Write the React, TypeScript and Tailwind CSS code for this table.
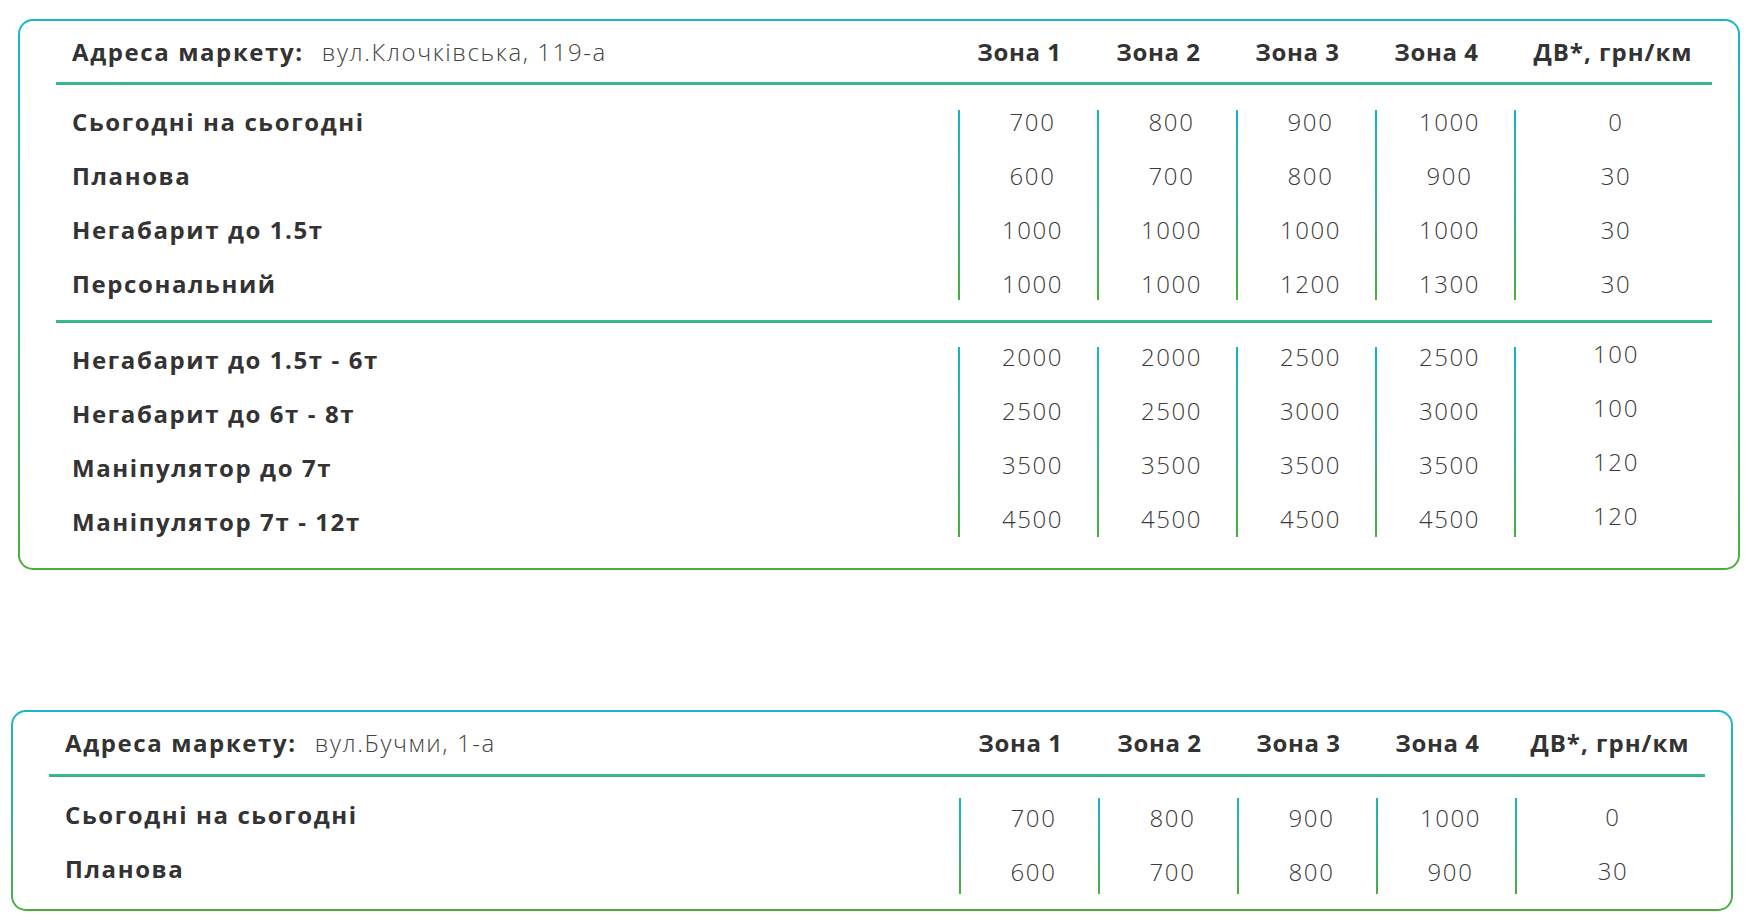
type Row = { label: string; values: string[] };

type Section = {
  rows: Row[];
  pad: string;
  bar: string;
  labelShift: string;
  lastShift: string;
};

const font = { fontFamily: '"Open Sans", "Liberation Sans", sans-serif' };

function Line() {
  return <div className="h-[3px] bg-linear-to-b from-[#2cbdc2] to-[#43b049]" />;
}

function Card({
  address,
  cols,
  head,
  sections,
  outer,
}: {
  address: string;
  cols: string;
  head: string;
  sections: Section[];
  outer: string;
}) {
  return (
    <div className={`rounded-[15px] bg-linear-to-b from-[#16b7c6] to-[#4bae3a] p-[2px] ${outer}`}>
      <div className="rounded-[13px] bg-white pl-[36px] pr-[26px] text-[#333]" style={font}>
        <div className={`grid items-center ${head} ${cols}`}>
          <div className="flex items-center pl-[16px]">
            <span className="text-[24px] font-bold tracking-[1.6px]">Адреса маркету:</span>
            <span className="ml-[18px] text-[24px] font-light tracking-[1.6px] text-[#444]">{address}</span>
          </div>
          {['Зона 1', 'Зона 2', 'Зона 3', 'Зона 4'].map((z) => (
            <div key={z} className="pr-[16px] text-center text-[24px] font-bold tracking-[0.6px]">
              {z}
            </div>
          ))}
          <div className="text-center text-[24px] font-bold tracking-[1px]">ДВ*, грн/км</div>
        </div>
        {sections.map((s, i) => (
          <div key={i}>
            <Line />
            <div className={`grid ${cols} ${s.pad}`}>
              <div className="flex flex-col pl-[16px]">
                {s.rows.map((r) => (
                  <div
                    key={r.label}
                    className={`flex h-[54px] items-center text-[24px] font-bold tracking-[1.6px] ${s.labelShift}`}
                  >
                    {r.label}
                  </div>
                ))}
              </div>
              {[0, 1, 2, 3, 4].map((c) => (
                <div key={c} className="flex">
                  <div className={`w-[2px] bg-linear-to-b from-[#12b5c8] to-[#4aae38] ${s.bar}`} />
                  <div className={`flex flex-1 flex-col ${c === 4 ? s.lastShift : 'pl-[8px]'}`}>
                    {s.rows.map((r) => (
                      <div
                        key={r.label}
                        className="flex h-[54px] items-center justify-center text-[24px] font-light tracking-[1.6px] text-[#3a3a3a]"
                      >
                        {r.values[c]}
                      </div>
                    ))}
                  </div>
                </div>
              ))}
            </div>
          </div>
        ))}
      </div>
    </div>
  );
}

const top: Row[] = [
  { label: 'Сьогодні на сьогодні', values: ['700', '800', '900', '1000', '0'] },
  { label: 'Планова', values: ['600', '700', '800', '900', '30'] },
  { label: 'Негабарит до 1.5т', values: ['1000', '1000', '1000', '1000', '30'] },
  { label: 'Персональний', values: ['1000', '1000', '1200', '1300', '30'] },
];

const heavy: Row[] = [
  { label: 'Негабарит до 1.5т - 6т', values: ['2000', '2000', '2500', '2500', '100'] },
  { label: 'Негабарит до 6т - 8т', values: ['2500', '2500', '3000', '3000', '100'] },
  { label: 'Маніпулятор до 7т', values: ['3500', '3500', '3500', '3500', '120'] },
  { label: 'Маніпулятор 7т - 12т', values: ['4500', '4500', '4500', '4500', '120'] },
];

export default function App() {
  return (
    <div className="min-h-screen bg-white pt-[19px]">
      <Card
        address="вул.Клочківська, 119-а"
        cols="grid-cols-[1fr_139px_139px_139px_139px_198px]"
        head="h-[61px]"
        outer="ml-[18px] w-[1722px]"
        sections={[
          { rows: top, pad: 'pt-[10px] pb-[9px]', bar: 'mt-[15px] mb-[11px]', labelShift: '', lastShift: 'pl-[4px]' },
          {
            rows: heavy,
            pad: 'pt-[7px] pb-[22px]',
            bar: 'mt-[17px] mb-[9px]',
            labelShift: 'translate-y-[3px]',
            lastShift: 'pl-[4px] -translate-y-[3px]',
          },
        ]}
      />
      <Card
        address="вул.Бучми, 1-а"
        cols="grid-cols-[1fr_139px_139px_139px_139px_190px]"
        head="h-[62px]"
        outer="ml-[11px] mt-[140px] w-[1722px]"
        sections={[
          {
            rows: top.slice(0, 2),
            pad: 'pt-[14px] pb-[10px]',
            bar: 'mt-[7px] mb-[5px]',
            labelShift: '-translate-y-[3px]',
            lastShift: 'pl-[4px] -translate-y-[1px]',
          },
        ]}
      />
    </div>
  );
}
